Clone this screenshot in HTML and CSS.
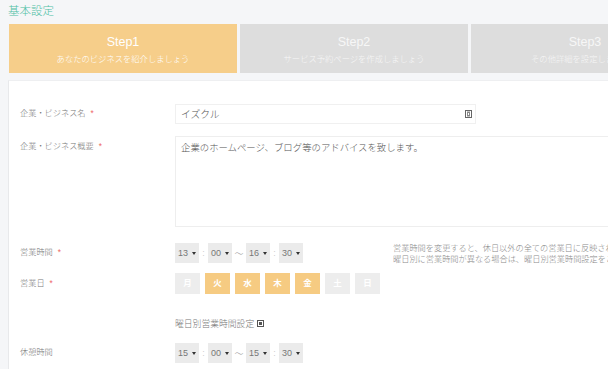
FILE: index.html
```html
<!DOCTYPE html>
<html lang="ja">

<head>
   <meta charset="UTF-8">
   <meta name="viewport" content="width=device-width, initial-scale=1.0">
   <title>基本設定</title>
   <link rel="stylesheet" href="styles.css">
</head>

<body>
   <h1 class="page-title">基本設定</h1>

   <div class="steps">
      <div class="step active">
         <div class="step-name">Step1</div>
         <div class="step-desc">あなたのビジネスを紹介しましょう</div>
      </div>
      <div class="step">
         <div class="step-name">Step2</div>
         <div class="step-desc">サービス予約ページを作成しましょう</div>
      </div>
      <div class="step">
         <div class="step-name">Step3</div>
         <div class="step-desc">その他詳細を設定しましょう</div>
      </div>
   </div>

   <div class="panel">
      <div class="form-row">
         <div class="label">企業・ビジネス名<span class="req">*</span></div>
         <div class="input">
            <span>イズクル</span>
            <svg class="input-icon" width="7" height="8" viewBox="0 0 7 8">
               <rect x="0.5" y="0.5" width="6" height="7" fill="none" stroke="#666"/>
               <rect x="2.5" y="2" width="2" height="4" fill="none" stroke="#888"/>
            </svg>
         </div>
      </div>

      <div class="form-row">
         <div class="label label-top">企業・ビジネス概要<span class="req">*</span></div>
         <div class="textarea">企業のホームページ、ブログ等のアドバイスを致します。</div>
      </div>

      <div class="form-row row-hours">
         <div class="label">営業時間<span class="req">*</span></div>
         <div class="time-range">
            <div class="select"><span>13</span><i class="caret"></i></div>
            <span class="colon">:</span>
            <div class="select"><span>00</span><i class="caret"></i></div>
            <span class="tilde">〜</span>
            <div class="select"><span>16</span><i class="caret"></i></div>
            <span class="colon">:</span>
            <div class="select"><span>30</span><i class="caret"></i></div>
         </div>
         <div class="note">
            営業時間を変更すると、休日以外の全ての営業日に反映されます。<br>
            曜日別に営業時間が異なる場合は、曜日別営業時間設定をご利用ください。
         </div>
      </div>

      <div class="form-row row-days">
         <div class="label">営業日<span class="req">*</span></div>
         <div class="days">
            <span class="day">月</span>
            <span class="day on">火</span>
            <span class="day on">水</span>
            <span class="day on">木</span>
            <span class="day on">金</span>
            <span class="day">土</span>
            <span class="day">日</span>
         </div>
      </div>

      <div class="form-row row-link">
         <div class="label"></div>
         <div class="day-link">曜日別営業時間設定
            <svg class="link-icon" width="7" height="7" viewBox="0 0 7 7">
               <rect x="0.5" y="0.5" width="6" height="6" fill="none" stroke="#555"/>
               <rect x="2" y="2" width="3" height="3" fill="#555"/>
            </svg>
         </div>
      </div>

      <div class="form-row row-break">
         <div class="label">休憩時間</div>
         <div class="time-range">
            <div class="select"><span>15</span><i class="caret"></i></div>
            <span class="colon">:</span>
            <div class="select"><span>00</span><i class="caret"></i></div>
            <span class="tilde">〜</span>
            <div class="select"><span>15</span><i class="caret"></i></div>
            <span class="colon">:</span>
            <div class="select"><span>30</span><i class="caret"></i></div>
         </div>
      </div>
   </div>
</body>

</html>
```

FILE: styles.css
```css
body {
   margin: 0;
   padding: 0 0 0 8px;
   background-color: #f5f6f8;
   font-family: "Liberation Sans", "Noto Sans CJK JP", sans-serif;
   font-weight: 300;
   color: #777;
   overflow: hidden;
   height: 369px;
}

.page-title {
   margin: 0;
   height: 24px;
   line-height: 22px;
   font-size: 11.5px;
   font-weight: 300;
   color: #4fbfa5;
}

.steps {
   display: flex;
   gap: 3px;
   padding-left: 1px;
   width: 800px;
}

.step {
   flex: 0 0 228px;
   height: 49px;
   background-color: #dddddd;
   color: #f7f7f7;
   text-align: center;
   box-sizing: border-box;
   padding-top: 10px;
}

.step.active {
   background-color: #f6ce8a;
   color: #fff;
}

.step-name {
   font-size: 12.5px;
   line-height: 16px;
   font-weight: normal;
}

.step-desc {
   font-size: 8.3px;
   line-height: 14px;
   margin-top: 2px;
}

.panel {
   margin-top: 7px;
   background-color: #fff;
   border-left: 1px solid #e8e9eb;
   border-top: 1px solid #eeeff1;
   padding: 23px 0 0 11px;
   width: 800px;
   height: 300px;
}

.form-row {
   display: flex;
   align-items: flex-start;
   margin-bottom: 12px;
}

.label {
   flex: 0 0 155px;
   font-size: 8.2px;
   line-height: 20px;
   color: #777;
}

.label-top {
   padding-top: 1px;
}

.req {
   color: #e66;
   margin-left: 5px;
}

.input {
   width: 301px;
   height: 20px;
   box-sizing: border-box;
   border: 1px solid #f0f0f0;
   display: flex;
   align-items: center;
   justify-content: space-between;
   padding: 0 3px 0 5px;
   font-size: 9.8px;
   color: #555;
}

.input-icon {
   display: block;
}

.textarea {
   width: 440px;
   height: 91px;
   box-sizing: border-box;
   border: 1px solid #eeeeee;
   padding: 5px 5px;
   font-size: 9.4px;
   line-height: 12px;
   color: #555;
}

.row-hours {
   margin-top: 16px;
   margin-bottom: 8px;
}

.time-range {
   display: flex;
   align-items: center;
   height: 20px;
}

.select {
   width: 24px;
   height: 20px;
   box-sizing: border-box;
   background-color: #ebebeb;
   display: flex;
   align-items: center;
   gap: 4px;
   padding: 0 0 0 3px;
   font-size: 9px;
   color: #777;
}

.caret {
   width: 0;
   height: 0;
   border-left: 2px solid transparent;
   border-right: 2px solid transparent;
   border-top: 3.5px solid #333;
}

.colon {
   width: 9px;
   text-align: center;
   font-size: 9px;
   color: #ccc;
}

.tilde {
   width: 14px;
   text-align: center;
   font-size: 9px;
   color: #999;
}

.note {
   margin-left: 90px;
   font-size: 8.2px;
   line-height: 11px;
   color: #888;
   white-space: nowrap;
   margin-top: 0;
}

.row-days {
   margin-bottom: 20px;
}

.row-days .label {
   line-height: 22px;
}

.days {
   display: flex;
   gap: 5px;
}

.day {
   width: 25px;
   height: 21px;
   line-height: 21px;
   text-align: center;
   background-color: #ededed;
   color: #fff;
   font-size: 8.5px;
   font-weight: bold;
}

.day.on {
   background-color: #f6cb82;
}

.row-link {
   margin-bottom: 12px;
}

.row-link .label {
   line-height: 16px;
}

.day-link {
   display: flex;
   align-items: center;
   gap: 3px;
   height: 16px;
   font-size: 8.8px;
   color: #777;
}

.link-icon {
   display: block;
}
```
